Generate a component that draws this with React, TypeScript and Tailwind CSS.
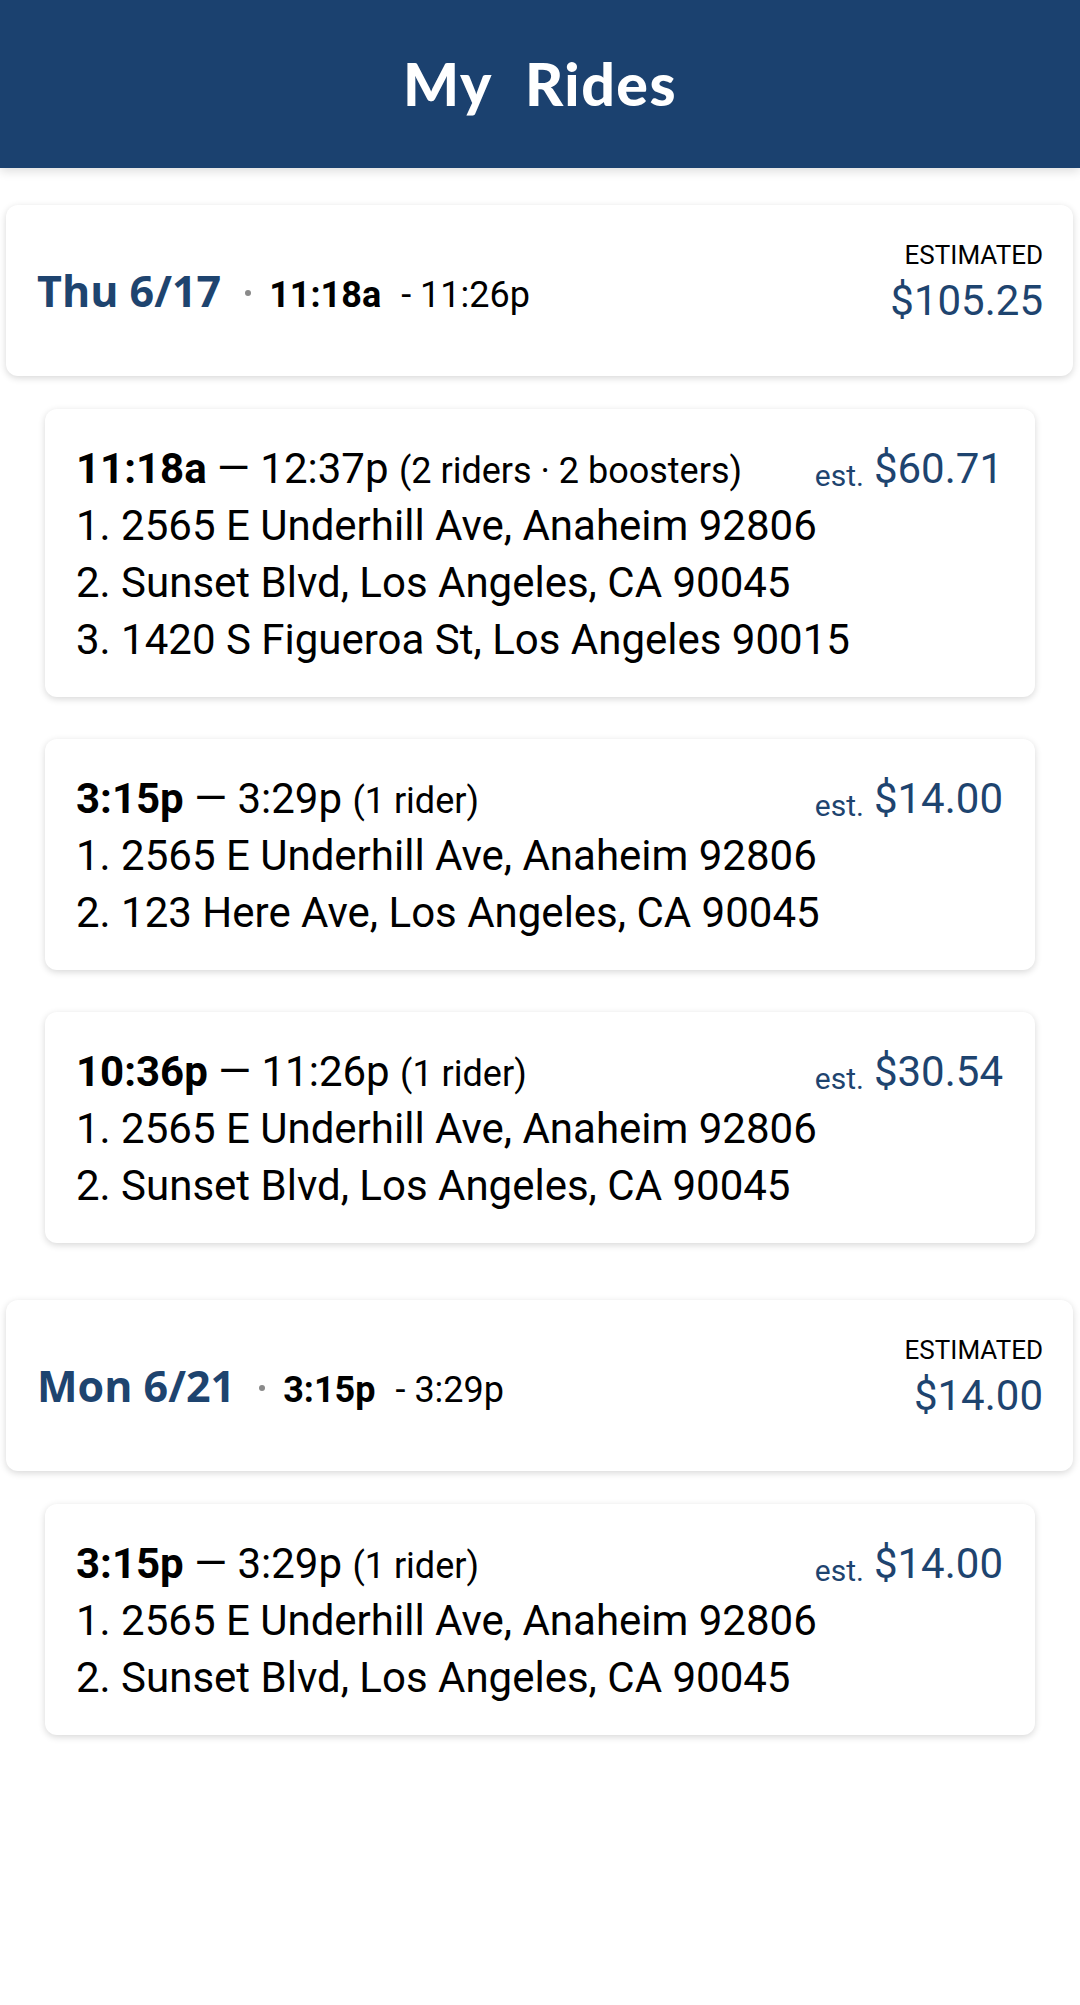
type Ride = {
  start: string;
  end: string;
  riders: string;
  price: string;
  stops: string[];
};

type Day = {
  label: string;
  start: string;
  end: string;
  total: string;
  rides: Ride[];
};

const days: Day[] = [
  {
    label: "Thu 6/17",
    start: "11:18a",
    end: "11:26p",
    total: "$105.25",
    rides: [
      {
        start: "11:18a",
        end: "12:37p",
        riders: "(2 riders · 2 boosters)",
        price: "$60.71",
        stops: [
          "2565 E Underhill Ave, Anaheim 92806",
          "Sunset Blvd, Los Angeles, CA 90045",
          "1420 S Figueroa St, Los Angeles 90015",
        ],
      },
      {
        start: "3:15p",
        end: "3:29p",
        riders: "(1 rider)",
        price: "$14.00",
        stops: [
          "2565 E Underhill Ave, Anaheim 92806",
          "123 Here Ave, Los Angeles, CA 90045",
        ],
      },
      {
        start: "10:36p",
        end: "11:26p",
        riders: "(1 rider)",
        price: "$30.54",
        stops: [
          "2565 E Underhill Ave, Anaheim 92806",
          "Sunset Blvd, Los Angeles, CA 90045",
        ],
      },
    ],
  },
  {
    label: "Mon 6/21",
    start: "3:15p",
    end: "3:29p",
    total: "$14.00",
    rides: [
      {
        start: "3:15p",
        end: "3:29p",
        riders: "(1 rider)",
        price: "$14.00",
        stops: [
          "2565 E Underhill Ave, Anaheim 92806",
          "Sunset Blvd, Los Angeles, CA 90045",
        ],
      },
    ],
  },
];

const DayCard = ({ day }: { day: Day }) => {
  return (
    <div className="ml-[6px] mr-[7px] h-[171px] rounded-[12px] bg-white shadow-[0_2px_7px_rgba(0,0,0,0.16)] pl-[31px] pr-[30px] flex items-center justify-between">
      <div className="flex items-baseline">
        <span className="font-['Open_Sans',sans-serif] font-bold text-[43px] text-[#1e446f] leading-none">
          {day.label}
        </span>
        <span className="inline-block w-[6px] h-[6px] rounded-full bg-[#8a8a8a] ml-[24px] mr-[18px] -translate-y-[11px]" />
        <span className="font-bold text-[36px] text-black leading-none">
          {day.start}
        </span>
        <span className="ml-[20px] text-[36px] text-black leading-none">
          - {day.end}
        </span>
      </div>
      <div className="flex flex-col items-end mb-[14px]">
        <span className="text-[26px] leading-[34px] text-black">ESTIMATED</span>
        <span className="text-[42px] leading-[57px] text-[#1e446f]">
          {day.total}
        </span>
      </div>
    </div>
  );
};

const RideCard = ({ ride }: { ride: Ride }) => {
  return (
    <div className="rounded-[12px] bg-white shadow-[0_2px_7px_rgba(0,0,0,0.16)] pl-[31px] pr-[32px] pt-[31px] pb-[29px] text-[42px] leading-[57px] text-black">
      <div className="h-[57px] flex items-baseline justify-between">
        <div className="whitespace-nowrap">
          <span className="font-bold">{ride.start}</span> — {ride.end}{" "}
          <span className="text-[36px]">{ride.riders}</span>
        </div>
        <div className="whitespace-nowrap text-[#1e446f]">
          <span className="text-[30px] mr-[10px] relative top-[3px]">est.</span>
          <span>{ride.price}</span>
        </div>
      </div>
      {ride.stops.map((stop, i) => (
        <div key={i} className="whitespace-nowrap">
          {i + 1}. {stop}
        </div>
      ))}
    </div>
  );
};

export default function App() {
  return (
    <div className="min-h-screen bg-white font-['Roboto',sans-serif]">
      <header className="h-[168px] bg-[#1b416f] flex items-center justify-center shadow-[0_3px_10px_rgba(0,0,0,0.14)]">
        <h1 className="font-['Lato',sans-serif] font-black text-white text-[59px] tracking-[1.5px] [word-spacing:18px]">
          My Rides
        </h1>
      </header>
      <main className="pt-[37px] flex flex-col gap-[57px]">
        {days.map((day) => (
          <section key={day.label}>
            <DayCard day={day} />
            <div className="mt-[33px] mx-[45px] flex flex-col gap-[42px]">
              {day.rides.map((ride, i) => (
                <RideCard key={i} ride={ride} />
              ))}
            </div>
          </section>
        ))}
      </main>
    </div>
  );
}
